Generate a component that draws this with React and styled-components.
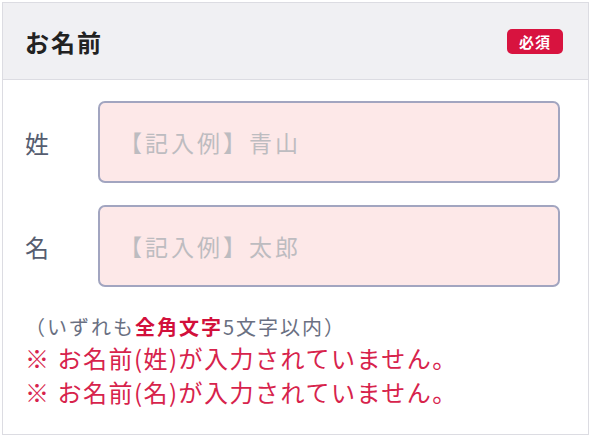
import React from "react";
import styled, { createGlobalStyle } from "styled-components";

const Global = createGlobalStyle`
  html, body { margin: 0; padding: 0; background: #ffffff; }
  body { font-family: "Noto Sans CJK JP", "Noto Sans", sans-serif; }
  * { box-sizing: border-box; }
`;

const Card = styled.section`
  margin: 2px 0 0 2px;
  width: 587px;
  height: 433px;
  border: 1px solid #dcdce2;
  background: #ffffff;
  display: flex;
  flex-direction: column;
`;

const Header = styled.header`
  height: 77px;
  background: #f0f0f3;
  border-bottom: 1px solid #dcdce2;
  display: flex;
  align-items: center;
  justify-content: space-between;
  padding: 0 25px 0 22px;
`;

const Title = styled.h2`
  margin: 0;
  font-size: 24px;
  font-weight: 700;
  color: #222222;
  letter-spacing: 2px;
`;

const Badge = styled.span`
  display: inline-flex;
  align-items: center;
  justify-content: center;
  width: 56px;
  height: 25px;
  border-radius: 5px;
  background: #d8133f;
  color: #ffffff;
  font-size: 15px;
  font-weight: 700;
  letter-spacing: 1px;
`;

const Body = styled.div`
  padding: 21px 28px 0 22px;
  display: flex;
  flex-direction: column;
  gap: 22px;
`;

const Row = styled.label`
  display: flex;
  align-items: center;
`;

const Label = styled.span`
  width: 73px;
  flex: none;
  font-size: 24px;
  color: #565d70;
`;

const Input = styled.input`
  flex: 1;
  height: 82px;
  border: 2px solid #a2a5c0;
  border-radius: 7px;
  background: #fde8e8;
  padding: 0 20px 0 19px;
  font-family: inherit;
  font-size: 23px;
  letter-spacing: 3px;
  color: #333;
  outline: none;
  &::placeholder { color: #bdbcc0; }
`;

const Notes = styled.div`
  padding: 26px 0 0 22px;
  display: flex;
  flex-direction: column;
`;

const Hint = styled.p`
  margin: 0;
  font-size: 20px;
  line-height: 28px;
  color: #6a7082;
  letter-spacing: 2px;
`;

const Strong = styled.strong`
  color: #d2103b;
  font-weight: 700;
`;

const Error = styled.p`
  margin: 0;
  font-size: 24px;
  line-height: 34px;
  color: #d7234c;
  letter-spacing: 1.5px;
`;

export default function App() {
  return (
    <>
      <Global />
      <Card>
        <Header>
          <Title>お名前</Title>
          <Badge>必須</Badge>
        </Header>
        <Body>
          <Row>
            <Label>姓</Label>
            <Input placeholder="【記入例】青山" />
          </Row>
          <Row>
            <Label>名</Label>
            <Input placeholder="【記入例】太郎" />
          </Row>
        </Body>
        <Notes>
          <Hint>（いずれも<Strong>全角文字</Strong>5文字以内）</Hint>
          <Error>※ お名前(姓)が入力されていません。</Error>
          <Error>※ お名前(名)が入力されていません。</Error>
        </Notes>
      </Card>
    </>
  );
}
